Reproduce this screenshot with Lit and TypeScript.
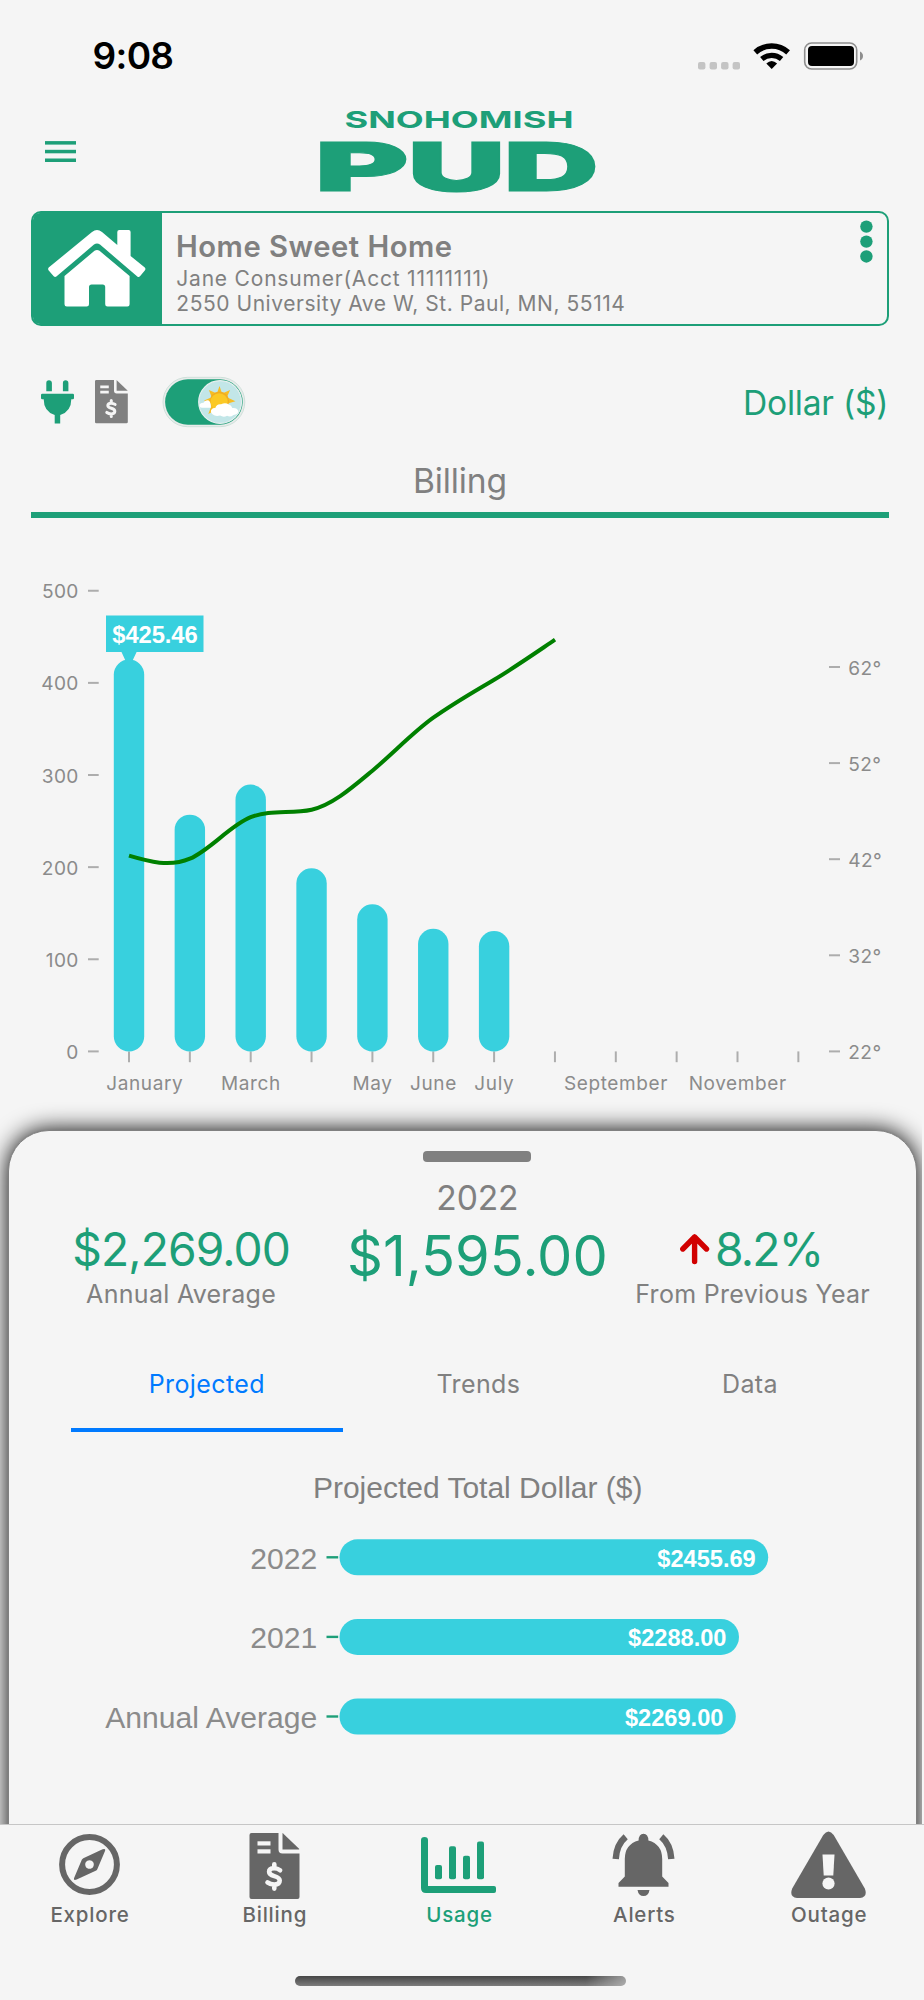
import { LitElement, html, css, svg } from "lit";
import { customElement, property } from "lit/decorators.js";
import { classMap } from "lit/directives/class-map.js";

const MONTHS: { label: string; amount: number; labelX?: number }[] = [
  { label: "January", amount: 425.46, labelX: 144.8 },
  { label: "", amount: 257 },
  { label: "March", amount: 289.6 },
  { label: "", amount: 198.7 },
  { label: "May", amount: 159.6 },
  { label: "June", amount: 133.2 },
  { label: "July", amount: 130.7 },
  { label: "", amount: 0 },
  { label: "September", amount: 0 },
  { label: "", amount: 0 },
  { label: "November", amount: 0 },
  { label: "", amount: 0 },
];

const PROJECTED = [
  { label: "2022", value: "$2455.69", end: 768, valueEnd: 755.5 },
  { label: "2021", value: "$2288.00", end: 738.8, valueEnd: 726.3 },
  { label: "Annual Average", value: "$2269.00", end: 735.6, valueEnd: 723.2 },
];

const billIcon = svg`
  <path d="M2 0H29V16.5Q29 20.5 33 20.5H50V64Q50 66 48 66H2Q0 66 0 64V2Q0 0 2 0Z"/>
  <path d="M33 .6Q33 0 33.6 .5L49.6 15.8Q50 16.5 49.4 16.5H33Z"/>
  <rect class="cut" x="8" y="8.3" width="13" height="4.2"/>
  <rect class="cut" x="8" y="16.3" width="13" height="4.2"/>
  <path class="cut-line" d="M30.6 37.2C29 35.9 27 35.2 24.6 35.2C21.4 35.2 19.6 36.6 19.6 38.8C19.6 44.6 30.2 41.6 30.2 47.6C30.2 50.3 28 51.6 24.8 51.6C22.2 51.6 19.8 50.8 18 49.4M24.8 31.2V35.2M24.8 51.6V55.6"/>`;

const ICONS = {
  explore: svg`
    <circle cx="37.5" cy="34.5" r="27.4" fill="none" stroke="currentColor" stroke-width="6"/>
    <path fill-rule="evenodd" d="M50.6 19.3Q54.3 18 52.8 21.6L45.3 39.2Q44.8 40.3 43.7 40.8L24.7 49.6Q21 51 22.3 47.5L29.8 29.7Q30.3 28.7 31.3 28.2ZM37.5 30.2a4.3 4.3 0 1 0 .01 0Z"/>`,
  billing: svg`<g transform="translate(12.5 3)">${billIcon}</g>`,
  usage: svg`
    <path d="M3.5 7Q7 7 7 10V56H59.5Q62.5 56 62.5 59.5T59.5 63H5Q0 63 0 58V10Q0 7 3.5 7Z"/>
    <rect x="14" y="35" width="7" height="14.3" rx="2"/>
    <rect x="28" y="16.3" width="7" height="33" rx="2"/>
    <rect x="42" y="25.8" width="7" height="23.5" rx="2"/>
    <rect x="56" y="11.5" width="7" height="37.8" rx="2"/>
    <rect x="55" y="56" width="20" height="7" rx="2"/>`,
  alerts: svg`
    <path d="M37.5 3.7Q42.2 3.7 42.4 10.5Q56.2 14.3 56.2 29V46.5L62.5 53V56.8H12.5V53L18.8 46.5V29Q18.8 14.3 32.6 10.5Q32.8 3.7 37.5 3.7Z"/>
    <path d="M31.5 60H43.5Q42.5 66 37.5 66T31.5 60Z"/>
    <path d="M9.7 29Q10.5 14.5 19.7 6.7M65.3 29Q64.5 14.5 55.3 6.7" fill="none" stroke="currentColor" stroke-width="6.4"/>`,
  outage: svg`
    <path d="M32.3 5Q37.5 -2.2 42.7 5L73.8 58.5Q77 67 69 68H6Q-2 67 1.2 58.5Z"/>
    <path class="cut" d="M31.5 24.5H43.5L42.3 45.5H32.7Z"/>
    <circle class="cut" cx="37.5" cy="53.5" r="6.1"/>`,
};

const NAV: { key: keyof typeof ICONS; label: string; active?: boolean }[] = [
  { key: "explore", label: "Explore" },
  { key: "billing", label: "Billing" },
  { key: "usage", label: "Usage", active: true },
  { key: "alerts", label: "Alerts" },
  { key: "outage", label: "Outage" },
];

@customElement("status-bar")
class StatusBar extends LitElement {
  static styles = css`
    :host { display: flex; height: 106px; padding: 3px 61px 0 92.6px; box-sizing: border-box; justify-content: space-between; }
    .time { font-size: 37px; font-weight: 600; line-height: 106px; letter-spacing: -0.7px; }
    .signals { display: block; margin-top: 35px; }
  `;
  render() {
    return html`
      <span class="time">9:08</span>
      <svg class="signals" width="166" height="34" viewBox="697 38 166 34">
        ${[698, 709.6, 721.1, 732.6].map((x) => svg`<rect x=${x} y="62" width="7.4" height="7.4" rx="2" fill="#c4c4c4"/>`)}
        <g fill="none" stroke="#000">
          <path d="M755.3 52.3A24.5 24.5 0 0 1 788.1 52.3" stroke-width="5.6"/>
          <path d="M761.8 59A15.3 15.3 0 0 1 781.6 59" stroke-width="5.2"/>
        </g>
        <path d="M771.7 69L766.3 63.6Q771.7 58.6 777.1 63.6Z"/>
        <rect x="804.7" y="43" width="52" height="26" rx="7" fill="none" stroke="#8e8e8e" stroke-width="1.6"/>
        <rect x="808" y="46" width="46" height="20" rx="4"/>
        <path d="M860 51.5Q863 53 863 56T860 60.5Z" fill="#8e8e8e"/>
      </svg>`;
  }
}

@customElement("usage-chart")
class UsageChart extends LitElement {
  static styles = css`
    :host { display: block; }
    svg { display: block; }
    text { font-family: Inter, sans-serif; fill: #8b8b8b; }
    .axis { font-size: 19.1px; letter-spacing: 0.4px; }
    .month { font-size: 19px; letter-spacing: 0.6px; text-anchor: middle; }
    .tip { font: 700 23.8px "Liberation Sans", Arial, sans-serif; fill: #fff; letter-spacing: -0.1px; }
    .tick { stroke: #adadad; stroke-width: 2; }
    .bar { fill: #38d0de; }
  `;
  render() {
    const base = 1051.7;
    const x = (i: number) => 129 + i * 60.85;
    return html`<svg width="924" height="612" viewBox="0 518.3 924 612">
      ${[0, 100, 200, 300, 400, 500].map((v) => {
        const y = base - v * 0.9213;
        return svg`<text class="axis" x="78.8" y=${y + 7.6} text-anchor="end">${v}</text>
          <line class="tick" x1="88" x2="98.7" y1=${y} y2=${y}/>`;
      })}
      ${[22, 32, 42, 52, 62].map((v) => {
        const y = base - (v - 22) * 9.61;
        return svg`<line class="tick" x1="829" x2="840" y1=${y} y2=${y}/>
          <text class="axis" x="848.3" y=${y + 7.6}>${v}°</text>`;
      })}
      ${MONTHS.map((m, i) => svg`
        <line class="tick" x1=${x(i)} x2=${x(i)} y1="1051.7" y2="1062.5"/>
        ${m.amount ? svg`<rect class="bar" x=${x(i) - 15.2} y=${base - m.amount * 0.9213} width="30.4" height=${m.amount * 0.9213} rx="15.2"/>` : ""}
        ${m.label ? svg`<text class="month" x=${m.labelX ?? x(i) + 0.2} y="1090.3">${m.label}</text>` : ""}`)}
      <path d="M129 856C149 862 170 867.5 189.9 859S230.5 825.5 250.7 817.5S291 814.6 311.6 810S352 788 372.4 771S413 732.5 433.3 718S474 692 494.1 680S535 653.5 555 640"
        fill="none" stroke="#008000" stroke-width="4"/>
      <path class="bar" d="M106 615.7H203.5V652.3H136.6L132.5 661H125.5L121.5 652.3H106Z"/>
      <text class="tip" x="112.3" y="643.8">$425.46</text>
    </svg>`;
  }
}

@customElement("projected-chart")
class ProjectedChart extends LitElement {
  static styles = css`
    :host { display: block; }
    svg { display: block; }
    text { font-family: "Liberation Sans", Arial, sans-serif; }
    .title { font-size: 30px; fill: #808080; }
    .label { font-size: 30.1px; fill: #8b8b8b; text-anchor: end; }
    .value { font-size: 23.6px; font-weight: 700; fill: #fff; text-anchor: end; }
    .bar { fill: #38d0de; }
  `;
  render() {
    return html`<svg width="904" height="390" viewBox="8.8 1432.2 904 390">
      <text class="title" x="312.7" y="1498">Projected Total Dollar ($)</text>
      ${PROJECTED.map((p, i) => {
        const y = 1557.5 + i * 79.6;
        return svg`<text class="label" x="317" y=${y + 11.6}>${p.label}</text>
          <line x1="326.3" x2="338" y1=${y} y2=${y} stroke="#1d9f78" stroke-width="2.4"/>
          <rect class="bar" x="339.3" y=${y - 18} width=${p.end - 339.3} height="36" rx="18"/>
          <text class="value" x=${p.valueEnd} y=${y + 9.6}>${p.value}</text>`;
      })}
    </svg>`;
  }
}

@customElement("tab-bar")
class TabBar extends LitElement {
  @property({ attribute: false }) items = NAV;
  static styles = css`
    :host { display: block; height: 176.4px; box-sizing: border-box; border-top: 1.5px solid #c6c6c6; background: #f5f5f5; }
    .items { display: grid; grid-template-columns: repeat(5, 184.8px); margin-left: -3px; }
    .item { display: flex; flex-direction: column; align-items: center; padding-top: 5.3px; color: #666; font-size: 20.5px; font-weight: 500; letter-spacing: 0.8px; }
    .active { color: #1d9f78; }
    .icon { display: block; fill: currentColor; }
    .cut { fill: #f5f5f5; }
    .cut-line { fill: none; stroke: #f5f5f5; stroke-width: 4.6; stroke-linecap: round; stroke-linejoin: round; }
    .label { line-height: 29px; padding-left: 1.2px; }
    .home { width: 330.5px; height: 10.5px; border-radius: 6px; margin: 47px 0 0 295px;
      background: linear-gradient(90deg, transparent 88%, rgba(200, 200, 200, 0.65)), linear-gradient(#464646, #7c7c7c); }
  `;
  render() {
    return html`
      <div class="items">
        ${this.items.map((n) => html`
          <div class=${classMap({ item: true, active: !!n.active })}>
            <svg class="icon" width="75" height="70" viewBox="0 0 75 70">${ICONS[n.key]}</svg>
            <span class="label">${n.label}</span>
          </div>`)}
      </div>
      <div class="home"></div>`;
  }
}

@customElement("app-root")
class AppRoot extends LitElement {
  static styles = css`
    :host { display: flex; flex-direction: column; width: 924px; height: 2000px; overflow: hidden; background: #f5f5f5; color: #000; font-family: Inter, "Open Sans", sans-serif; }
    svg { display: block; }
    .header { display: flex; height: 105px; align-items: flex-start; }
    .burger { margin: 34px 0 0 45px; }
    .logo { margin-left: 240px; fill: #1d9f78; overflow: visible; }
    .logo-top { font: 700 23.4px Inter, sans-serif; }
    .logo-main { font: 900 68px Inter, sans-serif; stroke: #1d9f78; stroke-width: 1; }
    .account { display: flex; height: 114.5px; margin: 0 34.7px 0 30.5px; box-sizing: border-box; border: 2px solid #1d9f78; border-radius: 10px; flex: none; color: #808080; }
    .house { width: 129.7px; background: #1d9f78; display: flex; justify-content: center; padding-top: 17.4px; box-sizing: border-box; border-radius: 7px 0 0 7px; flex: none; }
    .details { flex: 1; padding: 16px 0 0 13.8px; font-size: 21px; white-space: nowrap; }
    .name { font-size: 29.2px; font-weight: 600; line-height: 36px; letter-spacing: 0.53px; }
    .holder { line-height: 27.2px; letter-spacing: 0.8px; padding-left: 0.3px; }
    .address { line-height: 24.4px; letter-spacing: 0.54px; padding-left: 0.3px; }
    .more { padding: 7.2px 14px 0 0; }
    .controls { display: flex; height: 153px; align-items: center; padding: 0 35.8px 0 41px; flex: none; }
    .bill { margin-left: 21px; fill: #808080; }
    .cut { fill: #f5f5f5; }
    .cut-line { fill: none; stroke: #f5f5f5; stroke-width: 4.6; stroke-linecap: round; stroke-linejoin: round; }
    .toggle { margin-left: 34.6px; }
    .unit { margin-left: auto; color: #1d9f78; font-size: 33.6px; letter-spacing: -0.25px; }
    .heading { height: 33.5px; flex: none; border-bottom: 6.5px solid #1d9f78; margin: 0 34.7px 0 30.5px; color: #808080; text-align: center; font-size: 33.6px; line-height: 3.6px; letter-spacing: -0.15px; }
    .heading span { display: block; }
    usage-chart { flex: none; }
    .sheet-area { flex: 1; width: 922px; overflow: hidden; margin-top: -40px; padding: 40px 5.4px 0 7.6px; box-sizing: border-box; min-height: 0; }
    .sheet { box-sizing: border-box; height: 760px; border: 1.5px solid #808080; border-radius: 41px 41px 0 0; background: #f5f5f5; box-shadow: 0 0 23px #000; color: #808080; display: flex; flex-direction: column; }
    .handle { width: 108px; height: 11px; border-radius: 4px; background: #808080; margin: 19.5px 0 0 414.3px; flex: none; }
    .stats { display: grid; grid-template-columns: 345px 247.6px 303px; height: 197px; flex: none; text-align: center; white-space: nowrap; }
    .stat { padding-top: 59px; }
    .stat-main { padding-top: 17px; }
    .year { font-size: 33.6px; line-height: 38px; letter-spacing: -0.1px; }
    .total { display: flex; justify-content: center; font-size: 56px; line-height: 78px; color: #1d9f78; }
    .value { display: flex; justify-content: center; align-items: center; gap: 5px; font-size: 46.2px; line-height: 57px; color: #1d9f78; letter-spacing: -0.9px; }
    .note { font-size: 25px; line-height: 33px; letter-spacing: 0.3px; }
    .change { letter-spacing: -1.8px; padding-right: 4px; }
    .tabs { display: grid; grid-template-columns: repeat(3, 271.6px); margin-left: 62.4px; height: 73.7px; flex: none; font-size: 25px; letter-spacing: 0.4px; text-align: center; line-height: 50px; }
    .tabs span { border-bottom: 4.5px solid transparent; }
    .tabs .current { color: #007aff; border-color: #007aff; }
    tab-bar { flex: none; }
  `;

  render() {
    return html`
      <status-bar></status-bar>
      <div class="header">
        <svg class="burger" width="31" height="24" viewBox="45 140 31 24" fill="#1d9f78">
          <rect x="45" y="141.1" width="31" height="3.5"/>
          <rect x="45" y="149.8" width="31" height="3.5"/>
          <rect x="45" y="158.5" width="31" height="3.5"/>
        </svg>
        <svg class="logo" width="290" height="94" viewBox="316 106 290 94">
          <text class="logo-top" x="344.5" y="127.6" textLength="229" lengthAdjust="spacingAndGlyphs">SNOHOMISH</text>
          <text class="logo-main" y="190.8"><tspan x="314.6" textLength="94.5" lengthAdjust="spacingAndGlyphs">P</tspan><tspan x="407.5" textLength="98" lengthAdjust="spacingAndGlyphs">U</tspan><tspan x="503.6" textLength="95.4" lengthAdjust="spacingAndGlyphs">D</tspan></text>
        </svg>
      </div>

      <div class="account">
        <div class="house">
          <svg width="98" height="77" viewBox="48 230 98 77" fill="#fff">
            <path d="M92 232Q97 228.2 102 232L117.3 245V232Q117.3 230 119.3 230H128.6Q130.6 230 130.6 232V256L144.5 267.3Q146.2 268.7 144.8 270.4L140 276.2Q138.7 277.5 137.3 276.4L100 244.6Q97 242.2 94 244.6L56.4 276.5Q55 277.6 53.7 276.2L48.7 270.4Q47.4 268.7 49 267.3Z"/>
            <path d="M94.5 250.8Q97 249 99.5 250.8L129.6 276V304.3Q129.6 306.6 127.4 306.6H107.5Q105.2 306.6 105.2 304.3V287Q105.2 284.4 102.6 284.4H91.6Q89 284.4 89 287V304.3Q89 306.6 86.6 306.6H66.8Q64.5 306.6 64.5 304.3V276Z"/>
          </svg>
        </div>
        <div class="details">
          <div class="name">Home Sweet Home</div>
          <div class="holder">Jane Consumer(Acct 11111111)</div>
          <div class="address">2550 University Ave W, St. Paul, MN, 55114</div>
        </div>
        <svg class="more" width="13" height="43" viewBox="0 0 13 43" fill="#1d9f78">
          <circle cx="6.4" cy="6.4" r="6.2"/><circle cx="6.4" cy="21.4" r="6.2"/><circle cx="6.4" cy="36.3" r="6.2"/>
        </svg>
      </div>

      <div class="controls">
        <svg width="33" height="44" viewBox="41 379.5 33 44" fill="#1d9f78">
          <path d="M46.3 390.8V382.5Q46.3 379.8 49 379.8T51.9 382.5V390.8ZM62.9 390.8V382.5Q62.9 379.8 65.6 379.8T68.4 382.5V390.8Z"/>
          <path d="M42.2 393.3H72.8Q74 393.3 74 394.5V397.6Q74 398.8 72.8 398.8H71.3Q71.3 411 60.2 414.6V423H54.7V414.6Q43.7 411 43.7 398.8H42.2Q41 398.8 41 397.6V394.5Q41 393.3 42.2 393.3Z"/>
        </svg>
        <svg class="bill" width="32.8" height="43.4" viewBox="0 0 50 66">${billIcon}</svg>
        <svg class="toggle" width="84" height="52" viewBox="162.5 376 84 52">
          <rect x="163.5" y="377.3" width="81.8" height="49.4" rx="24.7" fill="#e9eceb" stroke="#cfe0da" stroke-width="1"/>
          <rect x="165.6" y="379.3" width="77.6" height="45.4" rx="22.7" fill="#1d9f78"/>
          <circle cx="220.6" cy="402" r="21.4" fill="#c2e6e8" stroke="#e6efef" stroke-width="1.2"/>
          <path d="M220 386L222.6 393.4L230.6 390L227.4 397.2L236 401.3L227.4 403.8L231 411L220 408L208.8 414L212.6 404L204.5 400.5L212.2 397.2L209.4 390L217.4 393.4Z" fill="#f7bd24"/>
          <circle cx="220" cy="401" r="9.6" fill="#f0ae22"/>
          <circle cx="219.6" cy="401.8" r="8.6" fill="#fbc926"/>
          <path d="M202.5 407.8Q199.6 407.6 200 404.8Q201 402.6 204 402.8Q205.6 399.4 209.2 400.4Q211.4 401.6 211.4 407.8Z" fill="#fff"/>
          <path d="M213 414.3Q210.2 411.8 212.2 409.2Q213.6 407.6 215.8 408Q217 403.6 221.6 404.2Q226 402 229.4 404.6Q232 405.6 232.8 408Q237.6 407.4 238.8 411Q238.6 414.6 234 414.9Q231 417.6 227.6 415.8Q224 417.6 220.6 415.6Q216 417 213 414.3Z" fill="#fff"/>
        </svg>
        <span class="unit">Dollar ($)</span>
      </div>

      <div class="heading"><span>Billing</span></div>
      <usage-chart></usage-chart>

      <div class="sheet-area">
        <div class="sheet">
          <div class="handle"></div>
          <div class="stats">
            <div class="stat">
              <div class="value">$2,269.00</div>
              <div class="note">Annual Average</div>
            </div>
            <div class="stat-main">
              <div class="year">2022</div>
              <div class="total">$1,595.00</div>
            </div>
            <div class="stat">
              <div class="value change">
                <svg width="31" height="32" viewBox="680 1233 31 32" fill="none" stroke="#d10000" stroke-width="5.4" stroke-linecap="round" stroke-linejoin="round">
                  <path d="M695.6 1237V1261.5M683.8 1249L695.6 1237L707.5 1249"/>
                </svg>
                <span>8.2%</span>
              </div>
              <div class="note">From Previous Year</div>
            </div>
          </div>
          <div class="tabs">
            <span class="current">Projected</span><span>Trends</span><span>Data</span>
          </div>
          <projected-chart></projected-chart>
        </div>
      </div>
      <tab-bar></tab-bar>
    `;
  }
}
